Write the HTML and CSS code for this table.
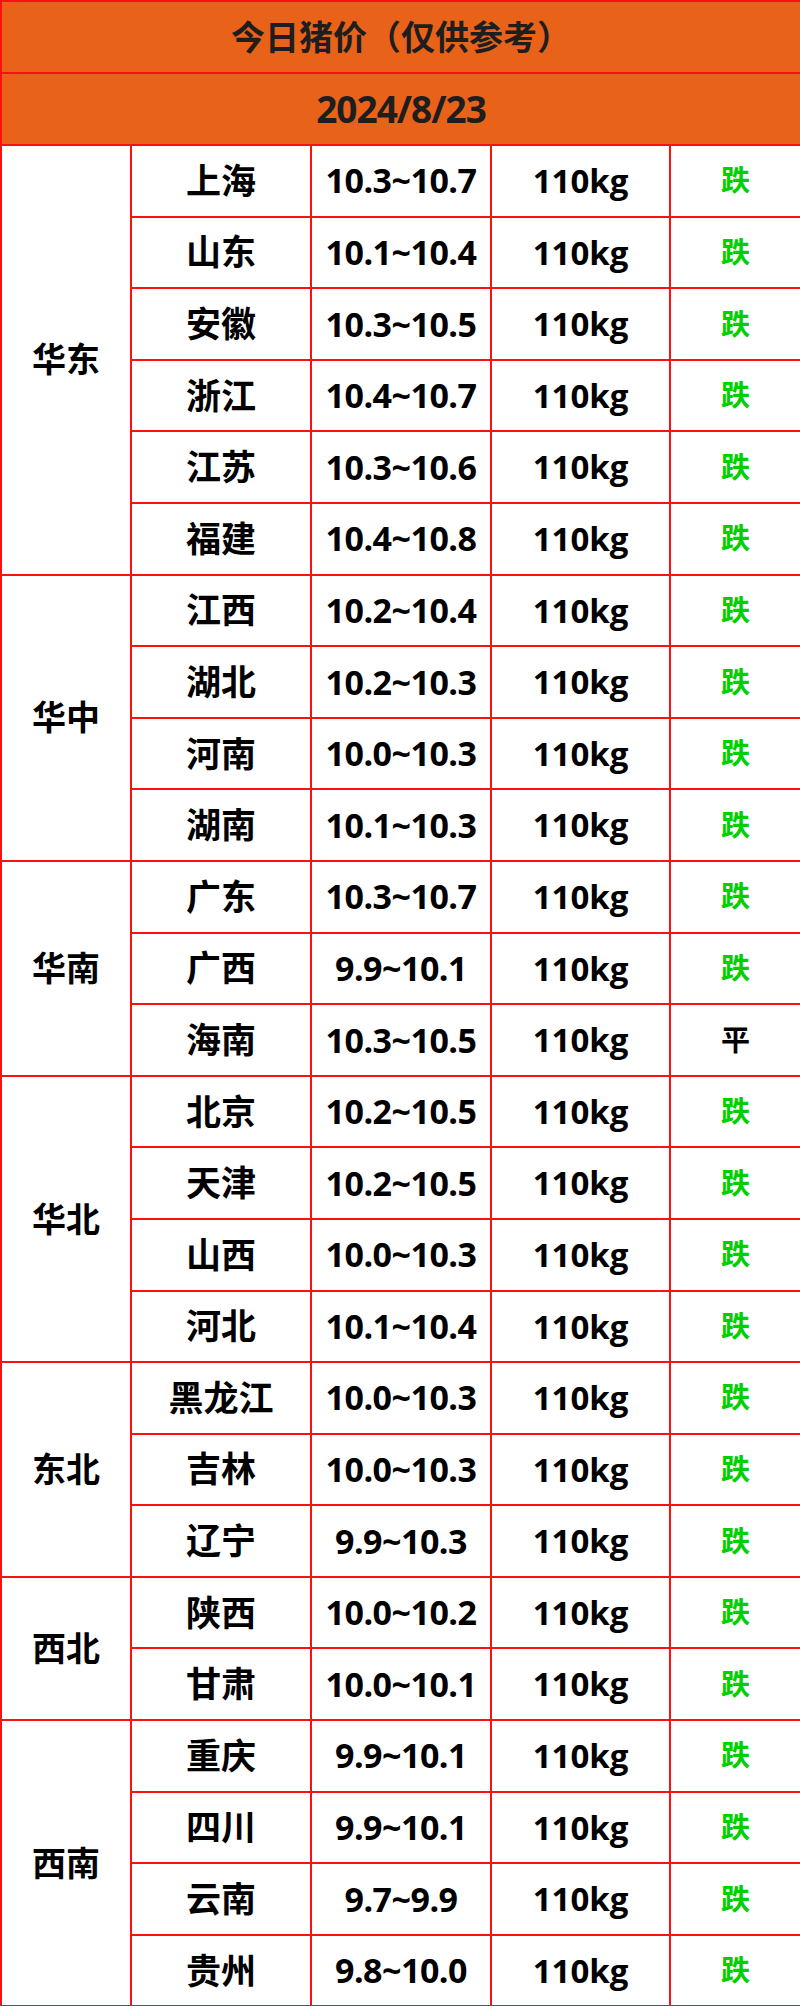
FILE: index.html
```html
<!DOCTYPE html>
<html lang="zh-CN">
<head>
<meta charset="utf-8">
<title>今日猪价</title>
<link rel="stylesheet" href="styles.css">
</head>
<body>
<table class="price-table">
  <colgroup>
    <col class="c-region"><col class="c-prov"><col class="c-price"><col class="c-weight"><col class="c-trend">
  </colgroup>
  <thead>
    <tr class="head-row"><th colspan="5" class="title">今日猪价（仅供参考）</th></tr>
    <tr class="head-row"><th colspan="5" class="date">2024/8/23</th></tr>
  </thead>
  <tbody>
    <tr><td class="region" rowspan="6">华东</td><td class="prov">上海</td><td class="num">10.3~10.7</td><td class="wt">110kg</td><td class="trend down">跌</td></tr>
    <tr><td class="prov">山东</td><td class="num">10.1~10.4</td><td class="wt">110kg</td><td class="trend down">跌</td></tr>
    <tr><td class="prov">安徽</td><td class="num">10.3~10.5</td><td class="wt">110kg</td><td class="trend down">跌</td></tr>
    <tr><td class="prov">浙江</td><td class="num">10.4~10.7</td><td class="wt">110kg</td><td class="trend down">跌</td></tr>
    <tr><td class="prov">江苏</td><td class="num">10.3~10.6</td><td class="wt">110kg</td><td class="trend down">跌</td></tr>
    <tr><td class="prov">福建</td><td class="num">10.4~10.8</td><td class="wt">110kg</td><td class="trend down">跌</td></tr>

    <tr><td class="region" rowspan="4">华中</td><td class="prov">江西</td><td class="num">10.2~10.4</td><td class="wt">110kg</td><td class="trend down">跌</td></tr>
    <tr><td class="prov">湖北</td><td class="num">10.2~10.3</td><td class="wt">110kg</td><td class="trend down">跌</td></tr>
    <tr><td class="prov">河南</td><td class="num">10.0~10.3</td><td class="wt">110kg</td><td class="trend down">跌</td></tr>
    <tr><td class="prov">湖南</td><td class="num">10.1~10.3</td><td class="wt">110kg</td><td class="trend down">跌</td></tr>

    <tr><td class="region" rowspan="3">华南</td><td class="prov">广东</td><td class="num">10.3~10.7</td><td class="wt">110kg</td><td class="trend down">跌</td></tr>
    <tr><td class="prov">广西</td><td class="num">9.9~10.1</td><td class="wt">110kg</td><td class="trend down">跌</td></tr>
    <tr><td class="prov">海南</td><td class="num">10.3~10.5</td><td class="wt">110kg</td><td class="trend flat">平</td></tr>

    <tr><td class="region" rowspan="4">华北</td><td class="prov">北京</td><td class="num">10.2~10.5</td><td class="wt">110kg</td><td class="trend down">跌</td></tr>
    <tr><td class="prov">天津</td><td class="num">10.2~10.5</td><td class="wt">110kg</td><td class="trend down">跌</td></tr>
    <tr><td class="prov">山西</td><td class="num">10.0~10.3</td><td class="wt">110kg</td><td class="trend down">跌</td></tr>
    <tr><td class="prov">河北</td><td class="num">10.1~10.4</td><td class="wt">110kg</td><td class="trend down">跌</td></tr>

    <tr><td class="region" rowspan="3">东北</td><td class="prov">黑龙江</td><td class="num">10.0~10.3</td><td class="wt">110kg</td><td class="trend down">跌</td></tr>
    <tr><td class="prov">吉林</td><td class="num">10.0~10.3</td><td class="wt">110kg</td><td class="trend down">跌</td></tr>
    <tr><td class="prov">辽宁</td><td class="num">9.9~10.3</td><td class="wt">110kg</td><td class="trend down">跌</td></tr>

    <tr><td class="region" rowspan="2">西北</td><td class="prov">陕西</td><td class="num">10.0~10.2</td><td class="wt">110kg</td><td class="trend down">跌</td></tr>
    <tr><td class="prov">甘肃</td><td class="num">10.0~10.1</td><td class="wt">110kg</td><td class="trend down">跌</td></tr>

    <tr><td class="region" rowspan="4">西南</td><td class="prov">重庆</td><td class="num">9.9~10.1</td><td class="wt">110kg</td><td class="trend down">跌</td></tr>
    <tr><td class="prov">四川</td><td class="num">9.9~10.1</td><td class="wt">110kg</td><td class="trend down">跌</td></tr>
    <tr><td class="prov">云南</td><td class="num">9.7~9.9</td><td class="wt">110kg</td><td class="trend down">跌</td></tr>
    <tr><td class="prov">贵州</td><td class="num">9.8~10.0</td><td class="wt">110kg</td><td class="trend down">跌</td></tr>
  </tbody>
</table>
</body>
</html>
```

FILE: styles.css
```css
html, body {
  margin: 0;
  padding: 0;
  background: #ffffff;
}

.price-table {
  width: 800px;
  border-collapse: collapse;
  table-layout: fixed;
  font-family: "Open Sans", "Noto Sans CJK SC", sans-serif;
  font-weight: 700;
  color: #000000;
}

.c-region { width: 130px; }
.c-prov { width: 180px; }
.c-price { width: 180px; }
.c-weight { width: 179px; }
.c-trend { width: 131px; }

.price-table th,
.price-table td {
  border: 2px solid #ff1010;
  text-align: center;
  vertical-align: middle;
  padding: 0;
  line-height: 1.2;
}

.head-row {
  height: 72px;
}

.head-row th {
  background: #e9621a;
  color: #1e1e1e;
  font-weight: 700;
}

.title {
  font-size: 34px;
}

.date {
  font-size: 37px;
  letter-spacing: -1px;
}

.price-table tbody tr {
  height: 71.6px;
}

.region {
  font-size: 34px;
}

.prov {
  font-size: 35px;
}

.num {
  font-size: 34px;
  letter-spacing: -0.5px;
}

.wt {
  font-size: 33px;
}

.trend {
  font-size: 29px;
}

.trend.down {
  color: #00d000;
}

.trend.flat {
  color: #000000;
}
```
